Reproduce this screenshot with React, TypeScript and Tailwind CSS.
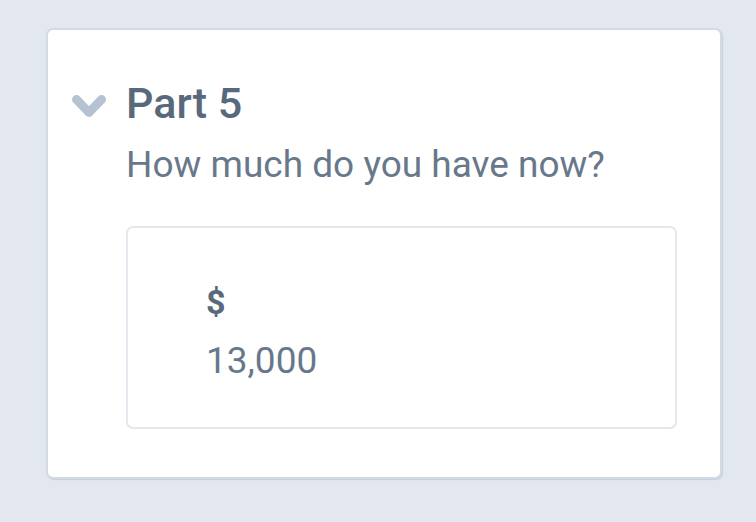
export default function App() {
  return (
    <div className="w-[756px] h-[522px] bg-[#e3e8f0] pt-[28px] pl-[46px] font-['Roboto',sans-serif]">
      <div className="w-[676px] h-[451px] bg-white border-2 border-[#d3dae5] rounded-[7px] shadow-[1px_1px_1px_rgba(148,163,184,0.35)] flex pt-[52px]">
        <div className="w-[78px] pl-[24px] pt-[13px]">
          <svg width="34" height="22" viewBox="0 0 34 22" fill="none">
            <polyline
              points="4.5,4.5 17,17.5 29.5,4.5"
              stroke="#b5c2d2"
              strokeWidth="9"
              strokeLinecap="round"
              strokeLinejoin="round"
            />
          </svg>
        </div>
        <div className="flex flex-col">
          <div className="text-[43px] leading-[43px] font-medium text-[#59697c]">Part 5</div>
          <div className="mt-[21px] text-[37px] leading-[37px] text-[#68788b]">How much do you have now?</div>
          <div className="mt-[43px] w-[551px] h-[203px] border-2 border-[#e3e8ef] rounded-[7px] pl-[78px] pt-[57px]">
            <div className="text-[34px] leading-[34px] font-bold text-[#5a6a7d]">$</div>
            <div className="mt-[23px] text-[37px] leading-[37px] text-[#68788b]">13,000</div>
          </div>
        </div>
      </div>
    </div>
  );
}
